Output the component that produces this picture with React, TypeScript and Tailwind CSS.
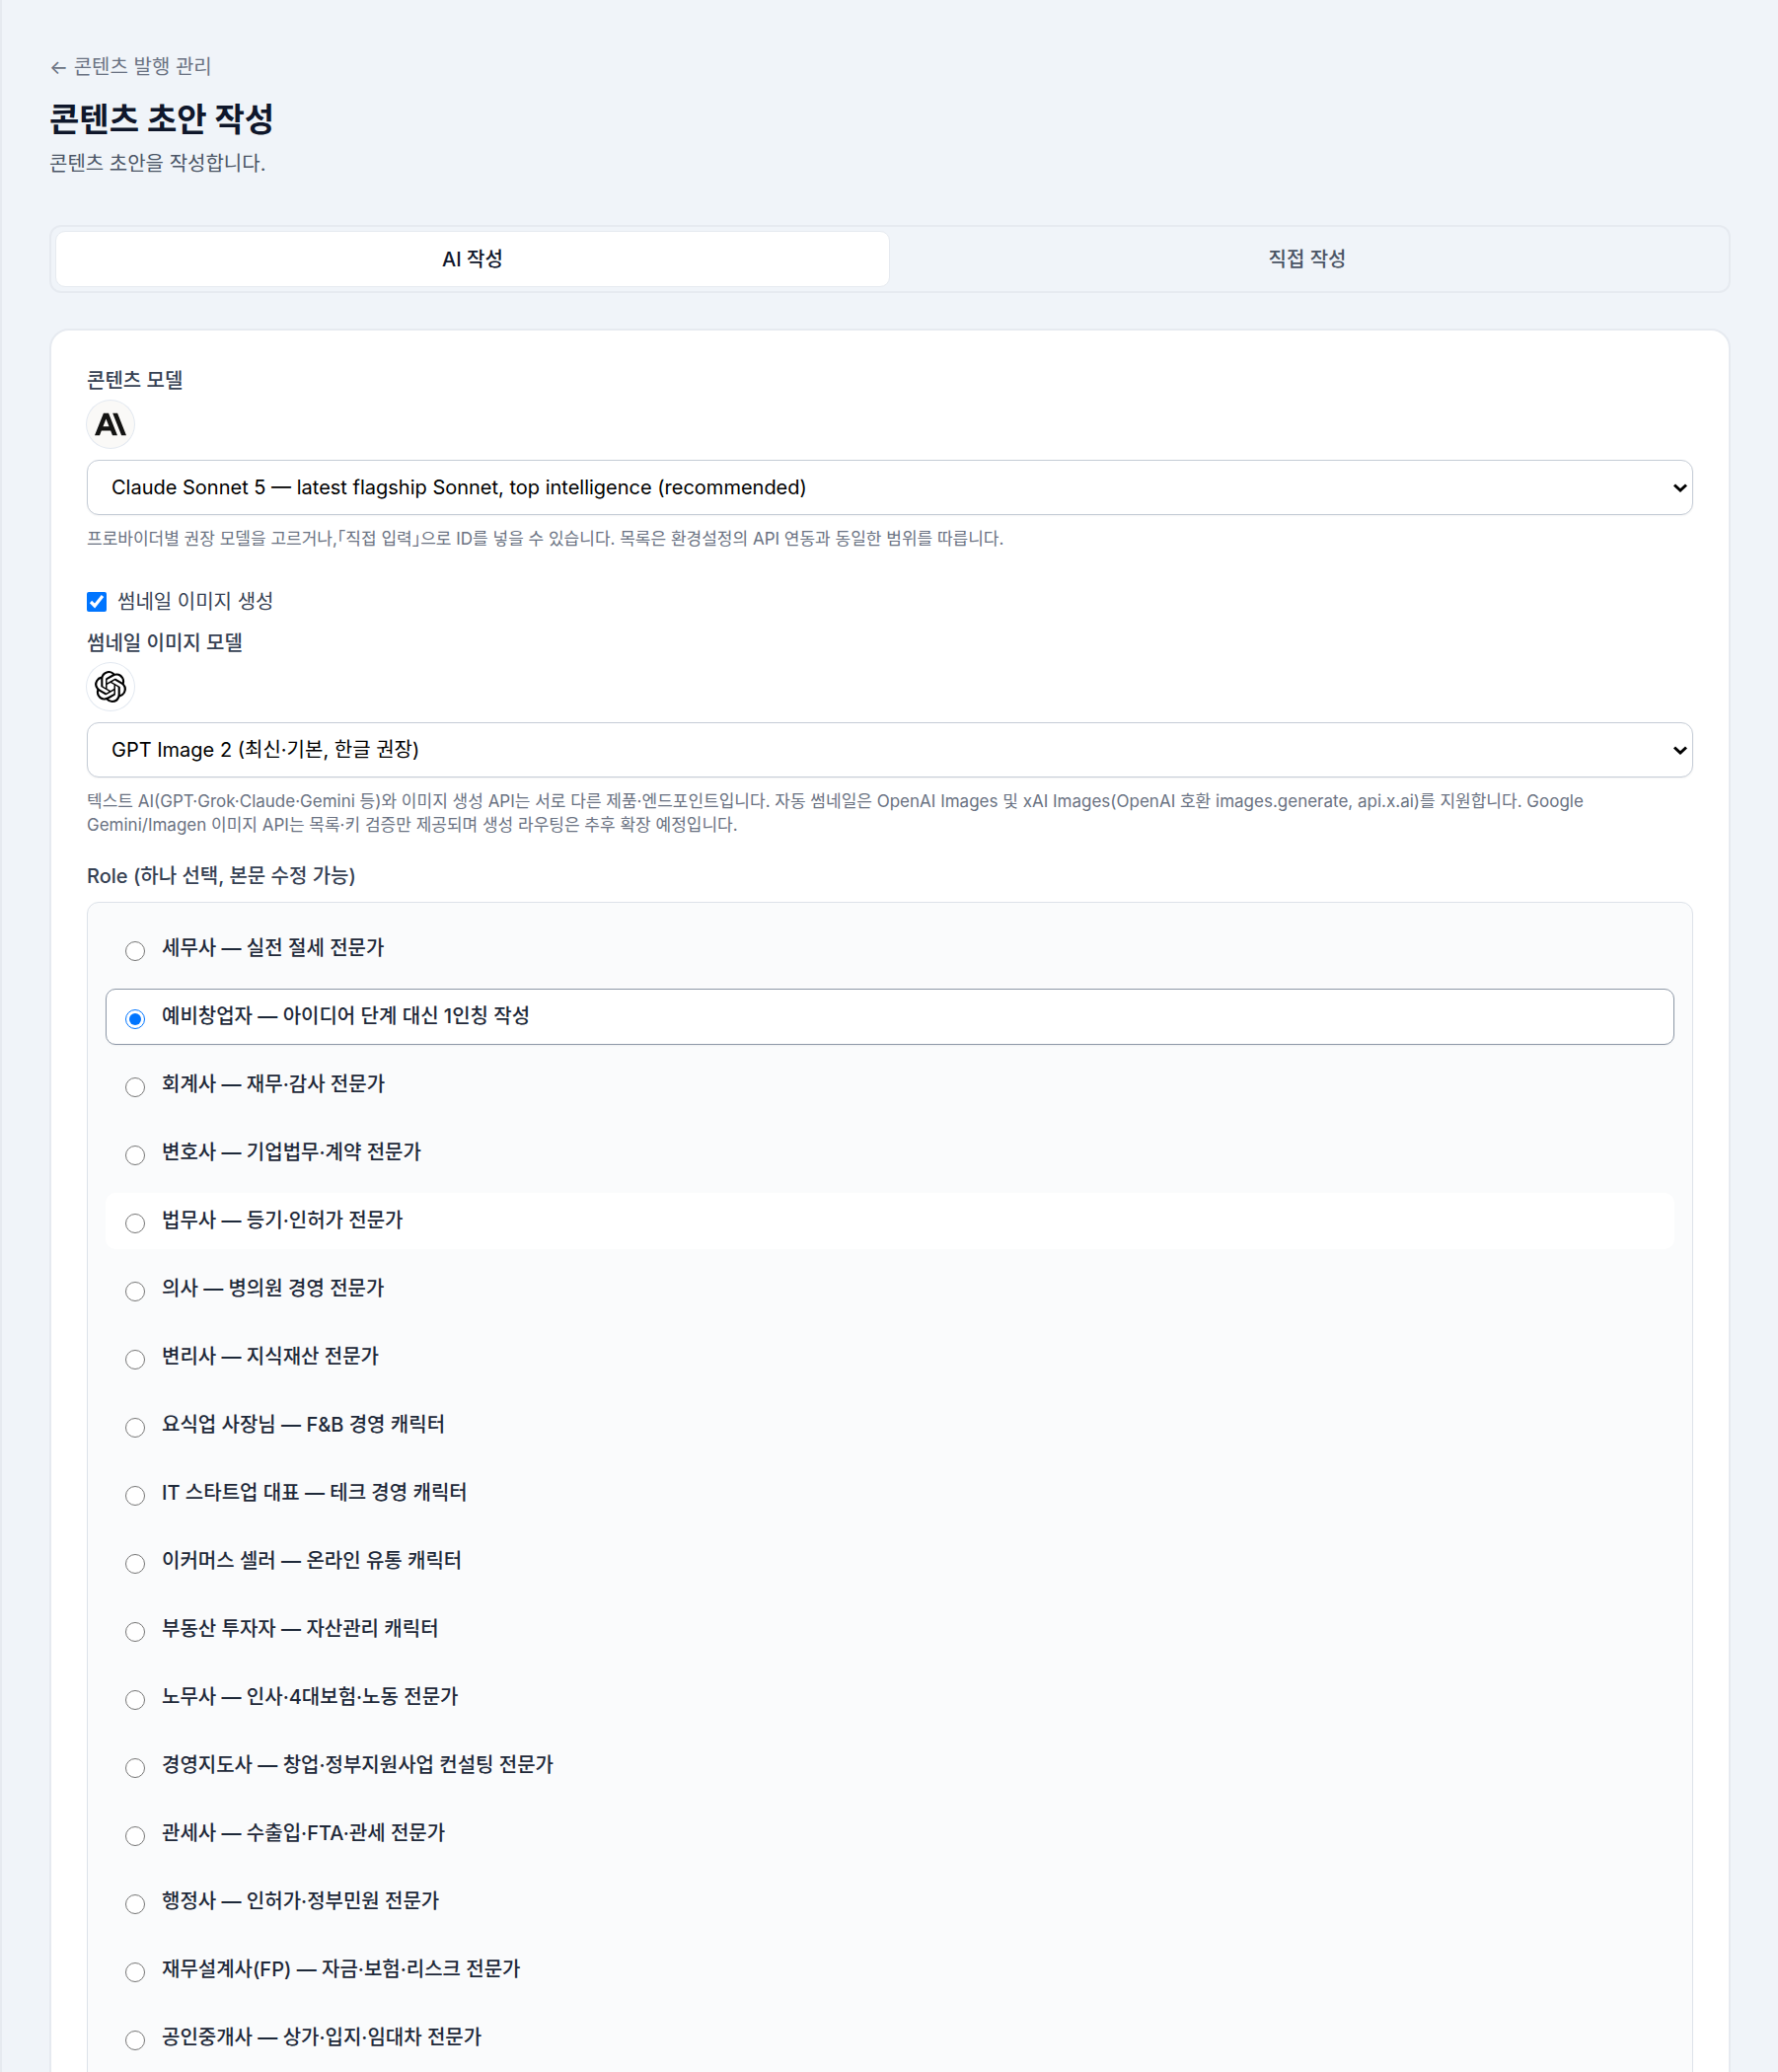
import React, { ReactNode, useState } from "react";
import { SiAnthropic, SiOpenai } from "react-icons/si";

const roles = [
  "세무사 — 실전 절세 전문가",
  "예비창업자 — 아이디어 단계 대신 1인칭 작성",
  "회계사 — 재무·감사 전문가",
  "변호사 — 기업법무·계약 전문가",
  "법무사 — 등기·인허가 전문가",
  "의사 — 병의원 경영 전문가",
  "변리사 — 지식재산 전문가",
  "요식업 사장님 — F&B 경영 캐릭터",
  "IT 스타트업 대표 — 테크 경영 캐릭터",
  "이커머스 셀러 — 온라인 유통 캐릭터",
  "부동산 투자자 — 자산관리 캐릭터",
  "노무사 — 인사·4대보험·노동 전문가",
  "경영지도사 — 창업·정부지원사업 컨설팅 전문가",
  "관세사 — 수출입·FTA·관세 전문가",
  "행정사 — 인허가·정부민원 전문가",
  "재무설계사(FP) — 자금·보험·리스크 전문가",
  "공인중개사 — 상가·입지·임대차 전문가",
];

interface ModelSelectProps {
  id: string;
  label: string;
  icon: ReactNode;
  options: string[];
  help: string;
}

function ModelSelect({ id, label, icon, options, help }: ModelSelectProps) {
  return (
    <div>
      <label
        htmlFor={id}
        className="block text-xl leading-7 font-medium text-gray-700"
      >
        {label}
      </label>
      <div className="mt-1.5">{icon}</div>
      <div className="relative mt-3">
        <select
          id={id}
          className="h-14 w-full appearance-none rounded-xl border border-[#c5ccd6] bg-white pr-10 pl-6 text-xl text-black shadow-xs focus:border-slate-500 focus:outline-none"
        >
          {options.map((option) => (
            <option key={option}>{option}</option>
          ))}
        </select>
        <svg
          className="pointer-events-none absolute top-6 right-1.5 h-2.5 w-3.5"
          viewBox="0 0 14 10"
          fill="none"
          stroke="black"
          strokeWidth="3"
        >
          <path d="M1 1.5l6 5.5 6-5.5" />
        </svg>
      </div>
      <p className="mt-3 text-[17px] leading-6 text-gray-500 [font-feature-settings:'halt']">
        {help}
      </p>
    </div>
  );
}

export default function App() {
  const [tab, setTab] = useState("ai");
  const [thumbnail, setThumbnail] = useState(true);
  const [role, setRole] = useState(1);
  const [active, setActive] = useState(4);

  const tabClass = (name: string) =>
    tab === name
      ? "border-[#e6eaf0] bg-white text-slate-900"
      : "border-transparent text-gray-600";

  return (
    <div className="min-h-screen border-l-2 border-[#e6eaf0] bg-[#f0f4f9] px-12 pt-13.5 pb-12 font-['Inter','Noto_Sans_CJK_KR',sans-serif]">
      <header>
        <a href="#" className="block w-fit text-xl leading-7 text-gray-500">
          ← 콘텐츠 발행 관리
        </a>
        <h1 className="mt-4.75 text-[33px] leading-10 font-bold text-slate-900">
          콘텐츠 초안 작성
        </h1>
        <p className="mt-2.75 text-xl leading-7 text-gray-600">
          콘텐츠 초안을 작성합니다.
        </p>
      </header>

      <div
        className="mt-12 grid grid-cols-2 rounded-xl border-2 border-[#e6eaf0] p-1"
        role="tablist"
      >
        <button
          type="button"
          role="tab"
          aria-selected={tab === "ai"}
          onClick={() => setTab("ai")}
          className={`h-[57px] rounded-[10px] border text-xl font-medium ${tabClass("ai")}`}
        >
          AI 작성
        </button>
        <button
          type="button"
          role="tab"
          aria-selected={tab === "manual"}
          onClick={() => setTab("manual")}
          className={`h-[57px] rounded-[10px] border text-xl font-medium ${tabClass("manual")}`}
        >
          직접 작성
        </button>
      </div>

      <form className="mt-9 rounded-[20px] border-2 border-[#e6eaf0] bg-white px-9 pt-9.25 pb-9">
        <ModelSelect
          id="content-model"
          label="콘텐츠 모델"
          icon={
            <span className="flex size-12 items-center justify-center rounded-full bg-[#faf9f7] ring-1 ring-slate-200">
              <SiAnthropic className="size-8 text-[#141413]" />
            </span>
          }
          options={[
            "Claude Sonnet 5 — latest flagship Sonnet, top intelligence (recommended)",
          ]}
          help="프로바이더별 권장 모델을 고르거나,「직접 입력」으로 ID를 넣을 수 있습니다. 목록은 환경설정의 API 연동과 동일한 범위를 따릅니다."
        />

        {/* 썸네일 */}
        <label className="mt-9.5 mb-3.5 flex items-center gap-2.75 text-xl leading-7 text-gray-700">
          <input
            type="checkbox"
            className="size-5"
            checked={thumbnail}
            onChange={(e) => setThumbnail(e.target.checked)}
          />
          썸네일 이미지 생성
        </label>

        <ModelSelect
          id="image-model"
          label="썸네일 이미지 모델"
          icon={
            <span className="flex size-12 items-center justify-center rounded-full bg-white ring-1 ring-slate-200">
              <SiOpenai className="size-8 text-black" />
            </span>
          }
          options={["GPT Image 2 (최신·기본, 한글 권장)"]}
          help="텍스트 AI(GPT·Grok·Claude·Gemini 등)와 이미지 생성 API는 서로 다른 제품·엔드포인트입니다. 자동 썸네일은 OpenAI Images 및 xAI Images(OpenAI 호환 images.generate, api.x.ai)를 지원합니다. Google Gemini/Imagen 이미지 API는 목록·키 검증만 제공되며 생성 라우팅은 추후 확장 예정입니다."
        />

        {/* 역할 선택 */}
        <fieldset className="mt-6.5">
          <legend className="text-xl leading-7 font-medium text-gray-700">
            Role (하나 선택, 본문 수정 가능)
          </legend>
          <div className="mt-3 flex flex-col gap-3 rounded-xl border border-[#dde2e9] bg-[#fafbfc] p-4.5">
            {roles.map((name, i) => (
              <label
                key={name}
                onMouseEnter={() => setActive(i)}
                className={`flex items-start gap-4.25 rounded-[10px] border px-4.75 py-3 text-xl leading-[31px] font-medium text-gray-800 ${
                  role === i
                    ? "border-[#8d98a7] bg-white shadow-xs"
                    : active === i
                      ? "border-transparent bg-white"
                      : "border-transparent"
                }`}
              >
                <input
                  type="radio"
                  name="role"
                  className="mt-2 size-5"
                  checked={role === i}
                  onChange={() => setRole(i)}
                />
                {name}
              </label>
            ))}
          </div>
        </fieldset>
      </form>
    </div>
  );
}
